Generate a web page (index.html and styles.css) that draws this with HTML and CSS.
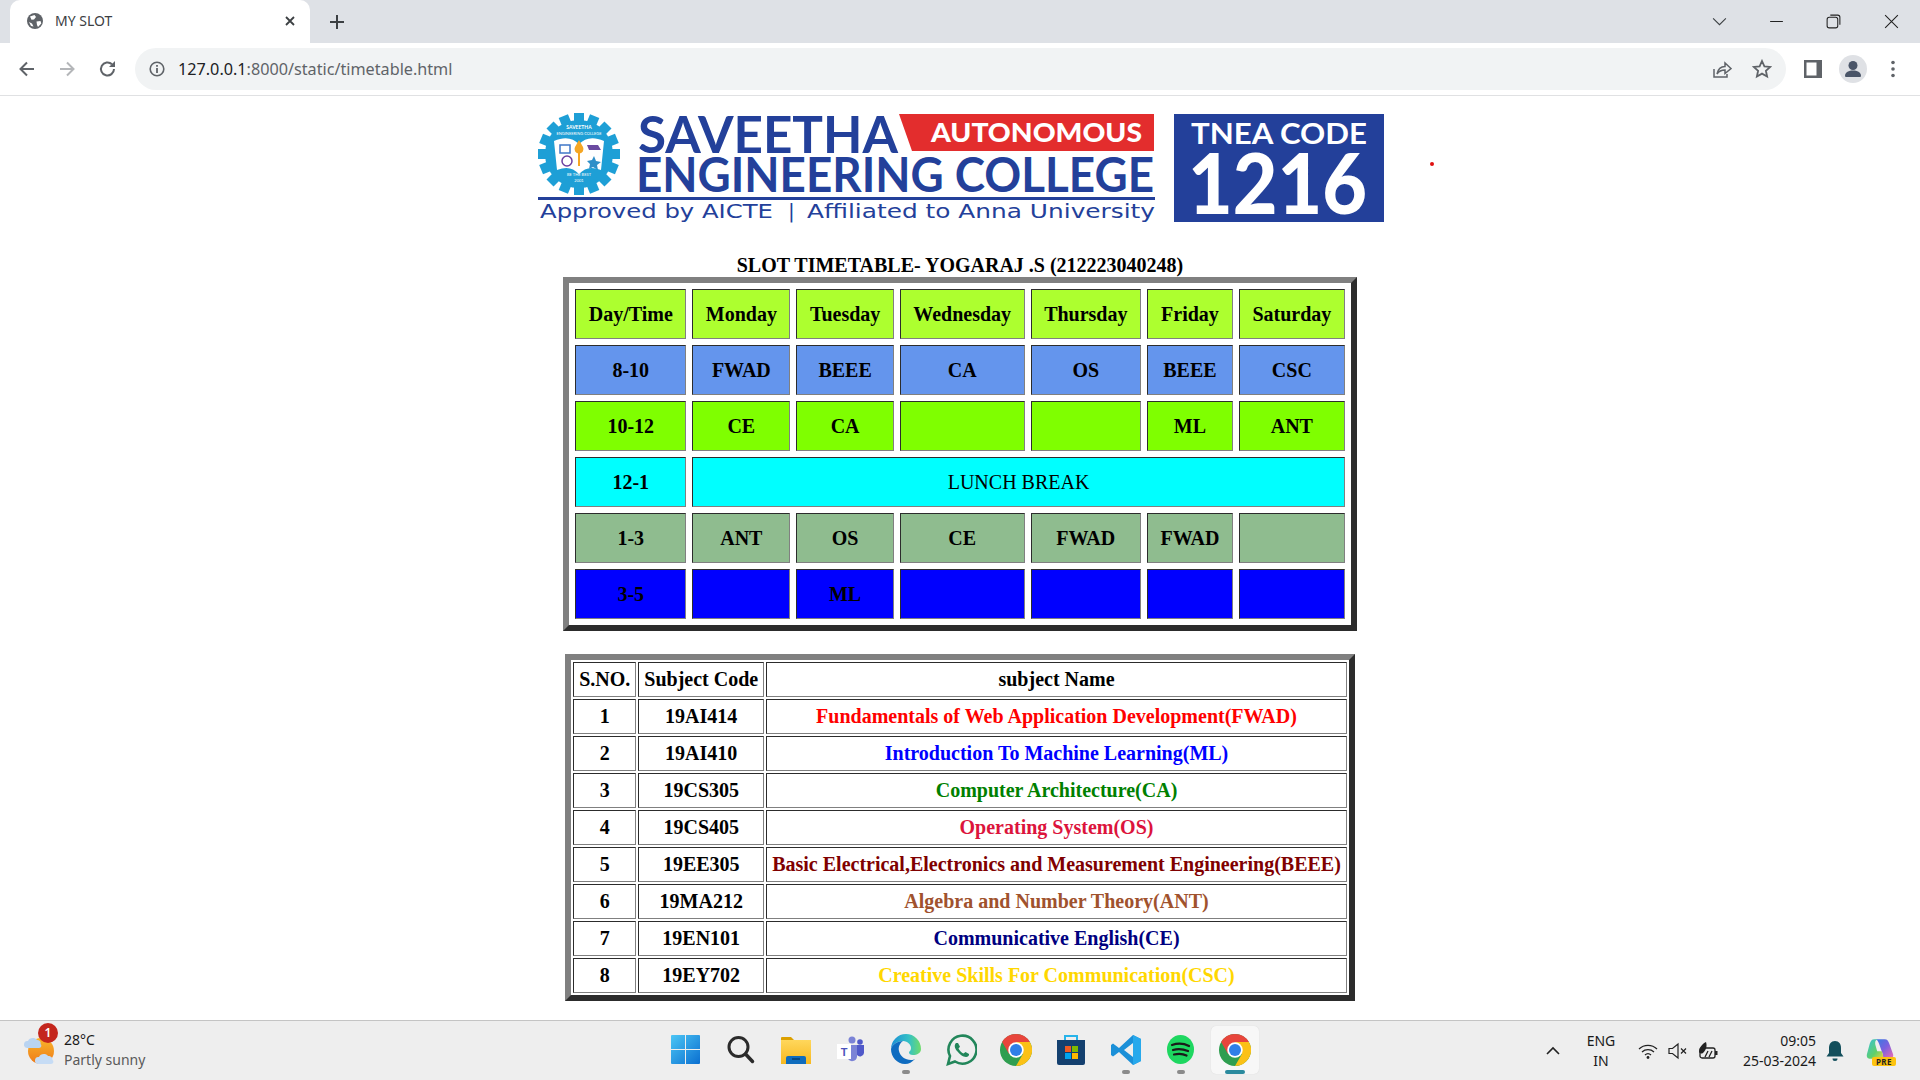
FILE: index.html
```html
<!DOCTYPE html>
<html lang="en">
<head>
<meta charset="utf-8">
<title>MY SLOT</title>
<link rel="stylesheet" href="styles.css">
</head>
<body>
<svg class="defs" width="0" height="0">
  <defs>
    <symbol id="chrome" viewBox="0 0 24 24">
      <circle cx="12" cy="12" r="12" fill="#2f9e50"/>
      <path d="M22.4 6A12 12 0 0 1 12 24l5.2-9L12 6z" fill="#fbc116"/>
      <path d="M12 0a12 12 0 0 1 10.4 6H12L6.8 15 1.6 6A12 12 0 0 1 12 0z" fill="#e8453c"/>
      <circle cx="12" cy="12" r="5.8" fill="#fff"/>
      <circle cx="12" cy="12" r="4.5" fill="#2f7fe8"/>
    </symbol>
    <linearGradient id="win" x1="0" y1="0" x2="1" y2="1"><stop offset="0" stop-color="#4cc6f5"/><stop offset="1" stop-color="#0a6fd0"/></linearGradient>
    <linearGradient id="edge" x1="0" y1="0" x2="1" y2="0"><stop offset="0" stop-color="#1b8fd6"/><stop offset=".6" stop-color="#35c1c5"/><stop offset="1" stop-color="#6fdc6a"/></linearGradient>
    <linearGradient id="fold" x1="0" y1="0" x2="0" y2="1"><stop offset="0" stop-color="#ffd75c"/><stop offset="1" stop-color="#f7b81f"/></linearGradient>
    <linearGradient id="sun" x1="0" y1="0" x2="0" y2="1"><stop offset="0" stop-color="#f9b52a"/><stop offset="1" stop-color="#ee7a1a"/></linearGradient>
    <linearGradient id="cop" x1="0" y1="0" x2="1" y2="1"><stop offset="0" stop-color="#2f7fe0"/><stop offset=".5" stop-color="#7a5fe0"/><stop offset="1" stop-color="#f06fb0"/></linearGradient>
    <linearGradient id="cop2" x1="0" y1="0" x2="1" y2="1"><stop offset="0" stop-color="#35c0d8"/><stop offset=".6" stop-color="#5fd06a"/><stop offset="1" stop-color="#f2d33f"/></linearGradient>
  </defs>
</svg>

<header class="browser">
  <div class="tabstrip">
    <div class="tab">
      <svg class="ico16" viewBox="0 0 16 16"><circle cx="8" cy="8" r="8" fill="#5f6368"/><path d="M3 3.5 7.5 2 9 4 7 6.5 4.5 6.8zM9.5 8.5l4-.5.8 2.5-3.3 3.5-1-2zM2 9l3 1.5 1.5 3L4 13z" fill="#fff"/></svg>
      <span class="tab-title">MY SLOT</span>
      <svg class="tab-x" viewBox="0 0 12 12"><path d="M2 2l8 8M10 2l-8 8" stroke="#3c4043" stroke-width="1.8"/></svg>
    </div>
    <svg class="newtab" viewBox="0 0 16 16"><path d="M8 1v14M1 8h14" stroke="#3c4043" stroke-width="2"/></svg>
    <div class="spacer"></div>
    <div class="winctl">
      <svg viewBox="0 0 16 16"><path d="M2 5l6 6 6-6" fill="none" stroke="#3c4043" stroke-width="1"/></svg>
    </div>
    <div class="winctl">
      <svg viewBox="0 0 16 16"><path d="M2 8h12" stroke="#222" stroke-width="1"/></svg>
    </div>
    <div class="winctl">
      <svg viewBox="0 0 16 16"><rect x="2" y="4" width="10" height="10" rx="2" fill="none" stroke="#222"/><path d="M5 2h7a2 2 0 0 1 2 2v7" fill="none" stroke="#222"/></svg>
    </div>
    <div class="winctl last">
      <svg viewBox="0 0 16 16"><path d="M2 2l12 12M14 2L2 14" stroke="#222" stroke-width="1"/></svg>
    </div>
  </div>
  <div class="toolbar">
    <div class="navbtn"><svg viewBox="0 0 20 20"><path d="M17 10H4M10 3.5 3.5 10l6.5 6.5" fill="none" stroke="#5f6368" stroke-width="2"/></svg></div>
    <div class="navbtn"><svg viewBox="0 0 20 20"><path d="M3 10h13M10 3.5l6.500 6.500-6.500 6.500" fill="none" stroke="#b4b6b9" stroke-width="2"/></svg></div>
    <div class="navbtn reload"><svg viewBox="0 0 20 20"><path d="M16 10a6.500 6.500 0 1 1-2-4.700" fill="none" stroke="#5f6368" stroke-width="2"/><path d="M17 2v6h-6z" fill="#5f6368"/></svg></div>
    <div class="omnibox">
      <svg class="ico-info" viewBox="0 0 16 16"><circle cx="8" cy="8" r="6.800" fill="none" stroke="#5f6368" stroke-width="1.600"/><path d="M8 7v5M8 4v1.800" stroke="#5f6368" stroke-width="1.800"/></svg>
      <span class="url"><span class="url-host">127.0.0.1</span>:8000/static/timetable.html</span>
      <div class="spacer"></div>
      <svg class="ico-omni" viewBox="0 0 20 20"><path d="M2 10v8h13v-3" fill="none" stroke="#5f6368" stroke-width="1.500"/><path d="M5 15c1-5 4-7.500 8-7.500V4l6 5.500-6 5V11c-3 0-6 1-8 4z" fill="none" stroke="#5f6368" stroke-width="1.500"/></svg>
      <svg class="ico-omni star" viewBox="0 0 20 20"><path d="M10 2l2.400 5.300 5.800.6-4.300 3.900 1.200 5.700L10 14.600l-5.100 2.900 1.200-5.700L1.800 7.900l5.800-.6z" fill="none" stroke="#5f6368" stroke-width="1.800"/></svg>
    </div>
    <div class="navbtn panel"><svg viewBox="0 0 20 20"><rect x="1" y="1" width="18" height="18" fill="#5f6368"/><rect x="3.500" y="3.500" width="10" height="13" fill="#fff"/></svg></div>
    <div class="navbtn"><svg class="avatar" viewBox="0 0 28 28"><circle cx="14" cy="14" r="14" fill="#dfe1e5"/><circle cx="14" cy="10.500" r="4.500" fill="#4a5568"/><path d="M6 21c0-4 4-5.500 8-5.500s8 1.500 8 5.500c0 .8-.6 1-1.500 1h-13C6.600 22 6 21.800 6 21z" fill="#4a5568"/></svg></div>
    <div class="navbtn"><svg viewBox="0 0 20 20"><circle cx="10" cy="3.500" r="1.800" fill="#5f6368"/><circle cx="10" cy="10" r="1.800" fill="#5f6368"/><circle cx="10" cy="16.500" r="1.800" fill="#5f6368"/></svg></div>
  </div>
</header>

<main class="page">
  <span class="laser"></span>
  <svg class="logo" viewBox="530 96 860 158" role="img">
    <g transform="translate(579 154)">
      <g fill="#1e9fd6">
        <circle r="34"/>
        <g id="teeth">
          <rect x="-5" y="-41" width="10" height="12"/><rect x="-5" y="29" width="10" height="12"/>
          <rect x="-41" y="-5" width="12" height="10"/><rect x="29" y="-5" width="12" height="10"/>
        </g>
        <use href="#teeth" transform="rotate(22.500)"/>
        <use href="#teeth" transform="rotate(45)"/>
        <use href="#teeth" transform="rotate(67.500)"/>
      </g>
      <path d="M-25-13C-14-18-6-16 0-10 6-16 14-18 25-13L22 16C12 12 6 14 0 20-6 14-12 12-22 16z" fill="#fff"/>
      <rect x="-19" y="-9" width="10" height="8" fill="none" stroke="#3f77c8" stroke-width="1.500"/>
      <path d="M8-9h11l3 5H10z" fill="#6b4aa0"/>
      <circle cx="-12" cy="7" r="5" fill="none" stroke="#6b3fa0" stroke-width="1.500"/>
      <path d="M15 2l2 5 5 1-4 3 1 5-5-3-4 2 1-5-3-3 5-1z" fill="#2f8fc8"/>
      <path d="M0-14l4 7a4.500 4.500 0 1 1-8 0z" fill="#f5a623"/><rect x="-1" y="-4" width="2" height="16" fill="#f5a623"/>
      <text class="seal-t" text-anchor="middle" y="-25">SAVEETHA</text>
      <text class="seal-s" text-anchor="middle" y="-19">ENGINEERING COLLEGE</text>
      <text class="seal-s" text-anchor="middle" y="22">BE THE BEST</text>
      <text class="seal-s" text-anchor="middle" y="28">2001</text>
    </g>
    <text class="logo-main" x="638" y="153" font-size="51" textLength="260" lengthAdjust="spacingAndGlyphs">SAVEETHA</text>
    <path d="M899 114h255v37H912z" fill="#e32d2d"/>
    <text class="logo-auto" x="931" y="142" font-size="27" textLength="211" lengthAdjust="spacingAndGlyphs">AUTONOMOUS</text>
    <text class="logo-main" x="636" y="192" font-size="48" textLength="518" lengthAdjust="spacingAndGlyphs">ENGINEERING COLLEGE</text>
    <rect x="538" y="197" width="617" height="3" fill="#23409a"/>
    <text class="logo-sub" x="540" y="218" font-size="20" textLength="233" lengthAdjust="spacingAndGlyphs">Approved by AICTE</text>
    <text class="logo-sub" x="788" y="218" font-size="20">|</text>
    <text class="logo-sub" x="807" y="218" font-size="20" textLength="348" lengthAdjust="spacingAndGlyphs">Affiliated to Anna University</text>
    <rect x="1174" y="114" width="210" height="108" fill="#23409a"/>
    <text class="logo-tnea" x="1191" y="144" font-size="29" textLength="176" lengthAdjust="spacingAndGlyphs">TNEA CODE</text>
    <text class="logo-code" x="1188" y="214" font-size="84" textLength="179" lengthAdjust="spacingAndGlyphs">1216</text>
  </svg>

  <h1 class="title">SLOT TIMETABLE- YOGARAJ .S (212223040248)</h1>
  <table class="slots">
    <tr class="r-head"><th>Day/Time</th><th>Monday</th><th>Tuesday</th><th>Wednesday</th><th>Thursday</th><th>Friday</th><th>Saturday</th></tr>
    <tr class="r-1"><th>8-10</th><th>FWAD</th><th>BEEE</th><th>CA</th><th>OS</th><th>BEEE</th><th>CSC</th></tr>
    <tr class="r-2"><th>10-12</th><th>CE</th><th>CA</th><th></th><th></th><th>ML</th><th>ANT</th></tr>
    <tr class="r-3"><th>12-1</th><td colspan="6">LUNCH BREAK</td></tr>
    <tr class="r-4"><th>1-3</th><th>ANT</th><th>OS</th><th>CE</th><th>FWAD</th><th>FWAD</th><th></th></tr>
    <tr class="r-5"><th>3-5</th><th></th><th>ML</th><th></th><th></th><th></th><th></th></tr>
  </table>
  <div class="gap"></div>
  <table class="subjects">
    <tr><th>S.NO.</th><th>Subject Code</th><th>subject Name</th></tr>
    <tr><th>1</th><th>19AI414</th><th class="c-red">Fundamentals of Web Application Development(FWAD)</th></tr>
    <tr><th>2</th><th>19AI410</th><th class="c-blue">Introduction To Machine Learning(ML)</th></tr>
    <tr><th>3</th><th>19CS305</th><th class="c-green">Computer Architecture(CA)</th></tr>
    <tr><th>4</th><th>19CS405</th><th class="c-crimson">Operating System(OS)</th></tr>
    <tr><th>5</th><th>19EE305</th><th class="c-maroon">Basic Electrical,Electronics and Measurement Engineering(BEEE)</th></tr>
    <tr><th>6</th><th>19MA212</th><th class="c-sienna">Algebra and Number Theory(ANT)</th></tr>
    <tr><th>7</th><th>19EN101</th><th class="c-navy">Communicative English(CE)</th></tr>
    <tr><th>8</th><th>19EY702</th><th class="c-gold">Creative Skills For Communication(CSC)</th></tr>
  </table>
</main>

<footer class="taskbar">
  <div class="weather">
    <div class="weather-ico">
      <svg viewBox="0 0 34 34"><circle cx="17" cy="18" r="13" fill="url(#sun)"/><path d="M3 15a3.500 3.500 0 0 1 1-7c1-3.500 7-4 9-1 3 0 4 2 3.500 4 1.500 1 1 4-1.500 4z" fill="#b9d4f2"/><path d="M14 31a3.500 3.500 0 0 1 1-7c1-3.500 7-4 9-1 3 0 5 2 4.500 4 1.500 1 1 4-1.500 4z" fill="#c6dcf5"/></svg>
      <span class="badge">1</span>
    </div>
    <div class="weather-txt"><span class="w-temp">28°C</span><span class="w-desc">Partly sunny</span></div>
  </div>
  <div class="apps">
    <div class="app"><svg class="i29" viewBox="0 0 29 29"><path d="M0 1a1 1 0 0 1 1-1h13v14H0zM15 0h13a1 1 0 0 1 1 1v13H15zM0 15h14v14H1a1 1 0 0 1-1-1zM15 15h14v13a1 1 0 0 1-1 1H15z" fill="url(#win)"/></svg></div>
    <div class="app"><svg class="i29" viewBox="0 0 29 29"><circle cx="12.500" cy="12" r="9.500" fill="none" stroke="#2b2b2b" stroke-width="3"/><path d="M19.500 19l7 7.500" stroke="#2b2b2b" stroke-width="3.500" stroke-linecap="round"/></svg></div>
    <div class="app"><svg class="i32" viewBox="0 0 32 32"><path d="M1 4a1 1 0 0 1 1-1h9l3 3h-13z" fill="#dca000"/><rect x="1" y="6" width="30" height="24" fill="url(#fold)"/><path d="M6 30v-6a2 2 0 0 1 2-2h16a2 2 0 0 1 2 2v6z" fill="#0f6cbd"/><path d="M12 25h8" stroke="#073e70" stroke-width="1.500"/></svg></div>
    <div class="app"><svg class="i29" viewBox="0 0 29 29"><circle cx="16" cy="5" r="3.500" fill="#7b83d6"/><circle cx="24" cy="7" r="2.800" fill="#5059c9"/><path d="M12 10h9v12a5 5 0 0 1-9 2z" fill="#7b83d6"/><path d="M21 10h7v8a4 4 0 0 1-7 2z" fill="#5059c9"/><rect x="1" y="9" width="14" height="15" fill="#fff"/><text class="teams-t" x="8" y="21" text-anchor="middle">T</text></svg></div>
    <div class="app has-dot"><svg class="i32" viewBox="0 0 32 32"><path d="M1 15A15 15 0 0 1 31 15c0 4-4 6-8 6-3 0-4-1-4-3 1-1 2-2 2-4 0-3-3-7-8-7-6 0-11 4-12 8z" fill="url(#edge)"/><path d="M1 15c1-4 6-8 12-8-3 2-5 6-4 10 1 5 6 9 12 9 2 0 3-.5 4-1-3 3-6 5-10 5C7 30 1 23 1 15z" fill="#0f6cc0"/></svg></div>
    <div class="app"><svg class="i32" viewBox="0 0 32 32"><path d="M3 30l2-8A14 14 0 1 1 10 27.500z" fill="none" stroke="#22865a" stroke-width="2.600"/><path d="M11 9c-2 2-1.500 5 1 8s6 6 9 6c2 0 3.500-1.500 3-3l-3.500-2-2 1.500c-2-.8-4-3-5-5l1.500-1.800L13 9z" fill="#22865a"/></svg></div>
    <div class="app"><svg class="i32"><use href="#chrome"/></svg></div>
    <div class="app"><svg class="i32" viewBox="0 0 32 32"><path d="M10 6V2h12v4" fill="none" stroke="#27b4ea" stroke-width="2"/><path d="M2 6h28v23a2 2 0 0 1-2 2H4a2 2 0 0 1-2-2z" fill="#14406f"/><rect x="10" y="12" width="6" height="6" fill="#f05a22"/><rect x="17" y="12" width="6" height="6" fill="#7fba00"/><rect x="10" y="19" width="6" height="6" fill="#00a4ef"/><rect x="17" y="19" width="6" height="6" fill="#ffb900"/></svg></div>
    <div class="app has-dot"><svg class="i32" viewBox="0 0 32 32"><path d="M23 1l8 4v22l-8 4-14-13-6 4.500-2-1.500V11l2-1.500L9 14z" fill="#1b90d8"/><path d="M23 1l8 4v22l-8 4z" fill="#27a9ec"/><path d="M23 9l-9 7 9 7z" fill="#eee"/></svg></div>
    <div class="app has-dot"><svg class="i29" viewBox="0 0 29 29"><ellipse cx="14.500" cy="14.500" rx="13.500" ry="14.500" fill="#1ed760"/><path d="M6 10c6-2 12-1.500 17 1M7 15c5-1.500 10-1 15 1M8 19.500c4-1 9-.8 12.500 1" fill="none" stroke="#1a1a1a" stroke-width="2.200" stroke-linecap="round"/></svg></div>
    <div class="app active"><svg class="i32"><use href="#chrome"/></svg></div>
  </div>
  <div class="tray">
    <svg class="tray-chev" viewBox="0 0 16 16"><path d="M2 11l6-6 6 6" fill="none" stroke="#222" stroke-width="1.600"/></svg>
    <div class="tray-txt lang"><span>ENG</span><span>IN</span></div>
    <svg class="tray-ico wifi" viewBox="0 0 20 20"><path d="M1 8a13 13 0 0 1 18 0M4 11a9 9 0 0 1 12 0M7 14a4.500 4.500 0 0 1 6 0" fill="none" stroke="#222" stroke-width="1.300"/><circle cx="10" cy="16.500" r="1.400" fill="#222"/></svg>
    <svg class="tray-ico sound" viewBox="0 0 20 20"><path d="M1 7.500h3.500L10 3v14l-5.500-4.500H1z" fill="none" stroke="#222" stroke-width="1.200"/><path d="M13 7.500l5 5M18 7.500l-5 5" stroke="#222" stroke-width="1.200"/></svg>
    <svg class="tray-ico batt" viewBox="0 0 20 20"><rect x="2" y="7" width="15" height="10" rx="2" fill="none" stroke="#222" stroke-width="1.300"/><rect x="17" y="10" width="2.500" height="4" fill="#222"/><path d="M7 16l3-6M11 16l3-6" stroke="#222" stroke-width="1.300"/><path d="M1 11c0-4 3-8 7-10 1 3 1 7-3 11-2 1-3 .5-4-1z" fill="#222"/></svg>
    <div class="tray-txt clock"><span>09:05</span><span>25-03-2024</span></div>
    <svg class="tray-ico bell" viewBox="0 0 20 22"><path d="M10 1c4 0 6 3 6 7v5l2.500 3.500h-17L4 13V8c0-4 2-7 6-7z" fill="#134f5c"/><path d="M7.500 18.500a2.500 2.500 0 0 0 5 0z" fill="#134f5c"/></svg>
    <div class="copilot">
      <svg viewBox="0 0 30 23"><path d="M9 1h11c3 0 4 2 5 5l4 11c.7 3-1 5-4 5H15c3 0 4-2 3-5L14 6C13 3 12 1 9 1z" fill="url(#cop)"/><path d="M9 1C6 1 5 3 4 6L1 17c-.7 3 1 5 4 5h10c3 0 4-2 3-5l-1-3H12L10 7C9.500 4 10 2 12 1z" fill="url(#cop2)"/></svg>
      <span class="pre">PRE</span>
    </div>
  </div>
</footer>
</body>
</html>
```

FILE: styles.css
```css
* { box-sizing: border-box; }
html, body { margin: 0; height: 100%; }
body {
  height: 1080px;
  display: flex;
  flex-direction: column;
  overflow: hidden;
  background: #fff;
  font-family: "Liberation Serif", serif;
  color: #000;
}
.defs { position: absolute; }
.spacer { flex: 1; }

/* browser chrome */
.browser { height: 96px; flex: none; font-family: "Noto Sans", sans-serif; border-bottom: 1px solid #e0e1e3; }
.tabstrip { height: 43px; background: #dee1e6; display: flex; align-items: center; }
.tab {
  margin-left: 10px;
  width: 300px;
  height: 43px;
  background: #fff;
  border-radius: 10px 10px 0 0;
  display: flex;
  align-items: center;
  padding: 0 14px 2px 17px;
}
.ico16 { width: 16px; height: 16px; flex: none; }
.tab-title { margin-left: 12px; font-size: 14px; color: #3c4043; flex: 1; white-space: nowrap; }
.tab-x { width: 12px; height: 12px; flex: none; }
.newtab { width: 16px; height: 16px; margin-left: 19px; flex: none; }
.winctl { width: 57px; height: 43px; display: flex; align-items: center; justify-content: center; }
.winctl svg { width: 17px; height: 17px; }
.winctl.last { width: 58px; }

.toolbar { height: 52px; background: #fff; display: flex; align-items: center; padding: 0 7px; }
.navbtn { width: 40px; height: 40px; flex: none; display: flex; align-items: center; justify-content: center; }
.navbtn svg { width: 20px; height: 20px; }
.navbtn svg.avatar { width: 28px; height: 28px; }
.navbtn.panel { margin-left: 7px; }
.navbtn.reload { padding-left: 2px; }
.omnibox {
  flex: 1;
  height: 42px;
  margin-left: 8px;
  border-radius: 21px;
  background: #f1f3f4;
  display: flex;
  align-items: center;
  padding: 0 11px 0 14px;
}
.ico-info { width: 16px; height: 16px; flex: none; }
.url { margin-left: 13px; font-size: 16.2px; color: #5f6368; white-space: nowrap; }
.url-host { color: #202124; }
.ico-omni { width: 20px; height: 20px; flex: none; margin-right: 3px; }
.ico-omni.star { margin-left: 17px; }

/* page */
.page { position: relative; flex: 1; min-height: 0; display: flex; flex-direction: column; align-items: center; }
.laser { position: absolute; left: 1430px; top: 66px; width: 4px; height: 4px; border-radius: 50%; background: #e01010; }
.logo { width: 860px; height: 158px; flex: none; display: block; }
.logo text { font-family: "Lato", "Noto Sans", sans-serif; }
.logo-main { fill: #23409a; font-weight: 700; }
.logo-auto { fill: #fff; font-weight: 900; }
.logo text.logo-sub { fill: #23409a; font-family: "DejaVu Sans", sans-serif; }
.logo-tnea { fill: #fff; font-weight: 700; }
.logo-code { fill: #fff; font-weight: 900; }
.logo text.seal-t { font-size: 5px; font-weight: 700; fill: #fff; }
.logo text.seal-s { font-size: 4px; fill: #fff; }
.teams-t { font-family: "Liberation Sans", sans-serif; font-size: 11px; font-weight: 700; fill: #4b53bc; }
.title { margin: 0; font-size: 20px; line-height: 23px; font-weight: 700; text-align: center; }
.gap { height: 23px; flex: none; }

table { border: 6px outset gray; font-size: 20px; line-height: 23px; color: #000; }
th, td { border: 1px inset gray; text-align: center; white-space: nowrap; }
th { font-weight: 700; }
td { font-weight: 400; }
.slots { border-spacing: 6px; }
.slots th, .slots td { padding: 12.5px; height: 50px; }
.subjects { border-spacing: 2px; }
.subjects th, .subjects td { padding: 5px; height: 35px; }
.r-head > * { background: #adff2f; }
.r-1 > * { background: #6495ed; }
.r-2 > * { background: #7fff00; }
.r-3 > * { background: #00ffff; }
.r-4 > * { background: #8fbc8f; }
.r-5 > * { background: #0000ff; }
.c-red { color: #ff0000; }
.c-blue { color: #0000ff; }
.c-green { color: #008000; }
.c-crimson { color: #dc143c; }
.c-maroon { color: #800000; }
.c-sienna { color: #a0522d; }
.c-navy { color: #000080; }
.c-gold { color: #ffd700; }

/* taskbar */
.taskbar {
  height: 60px;
  flex: none;
  background: #eeeeee;
  border-top: 1px solid #c4c4c4;
  display: grid;
  grid-template-columns: 1fr auto 1fr;
  align-items: center;
  font-family: "Noto Sans", sans-serif;
}
.weather { display: flex; align-items: center; padding: 0 0 2px 24px; }
.weather-ico { position: relative; width: 34px; height: 34px; }
.weather-ico svg { width: 34px; height: 34px; display: block; }
.badge {
  position: absolute;
  left: 14px;
  top: -10px;
  width: 20px;
  height: 20px;
  border-radius: 50%;
  background: #c4261d;
  color: #fff;
  font-size: 12px;
  line-height: 20px;
  font-weight: 600;
  text-align: center;
}
.weather-txt { display: flex; flex-direction: column; margin-left: 6px; }
.w-temp { font-size: 14px; line-height: 20px; color: #1a1a1a; }
.w-desc { font-size: 14px; line-height: 20px; color: #5a5a5a; }

.apps { display: flex; align-items: center; height: 59px; padding: 0 0 2px 1px; }
.app { position: relative; width: 55px; height: 48px; display: flex; align-items: center; justify-content: center; }
.i29 { width: 29px; height: 29px; }
.i32 { width: 32px; height: 32px; }
.app.has-dot::after, .app.active::after {
  content: "";
  position: absolute;
  left: 50%;
  bottom: 0;
  width: 8px;
  height: 4px;
  margin-left: -4px;
  border-radius: 2px;
  background: #8a8a8a;
}
.app.active { width: 48px; margin-left: 3px; margin-right: 4px; border-radius: 5px; background: #f7f7f7; box-shadow: 0 0 1px #d0d0d0; }
.app.active::after { width: 20px; margin-left: -10px; background: #2b8a9e; }

.tray { display: flex; align-items: center; justify-content: flex-end; padding-right: 24px; }
.tray-chev { width: 20px; height: 16px; }
.tray-ico { width: 20px; height: 20px; flex: none; }
.tray-txt { display: flex; flex-direction: column; font-size: 14px; line-height: 20px; color: #1a1a1a; }
.lang { width: 40px; margin-left: 18px; text-align: center; }
.wifi { margin-left: 17px; }
.sound { margin-left: 10px; }
.batt { margin-left: 10px; }
.clock { width: 96px; margin-left: 2px; text-align: right; }
.bell { margin-left: 9px; height: 22px; }
.copilot { position: relative; width: 32px; height: 32px; margin-left: 19px; }
.copilot svg { width: 28px; height: 22px; display: block; margin: 3px 0 0 2px; }
.pre {
  position: absolute;
  left: 8px;
  top: 22px;
  width: 24px;
  height: 9px;
  border-radius: 2px;
  background: #fdc30f;
  font-size: 8px;
  line-height: 9px;
  font-weight: 700;
  letter-spacing: .5px;
  text-align: center;
  color: #222;
}
```
